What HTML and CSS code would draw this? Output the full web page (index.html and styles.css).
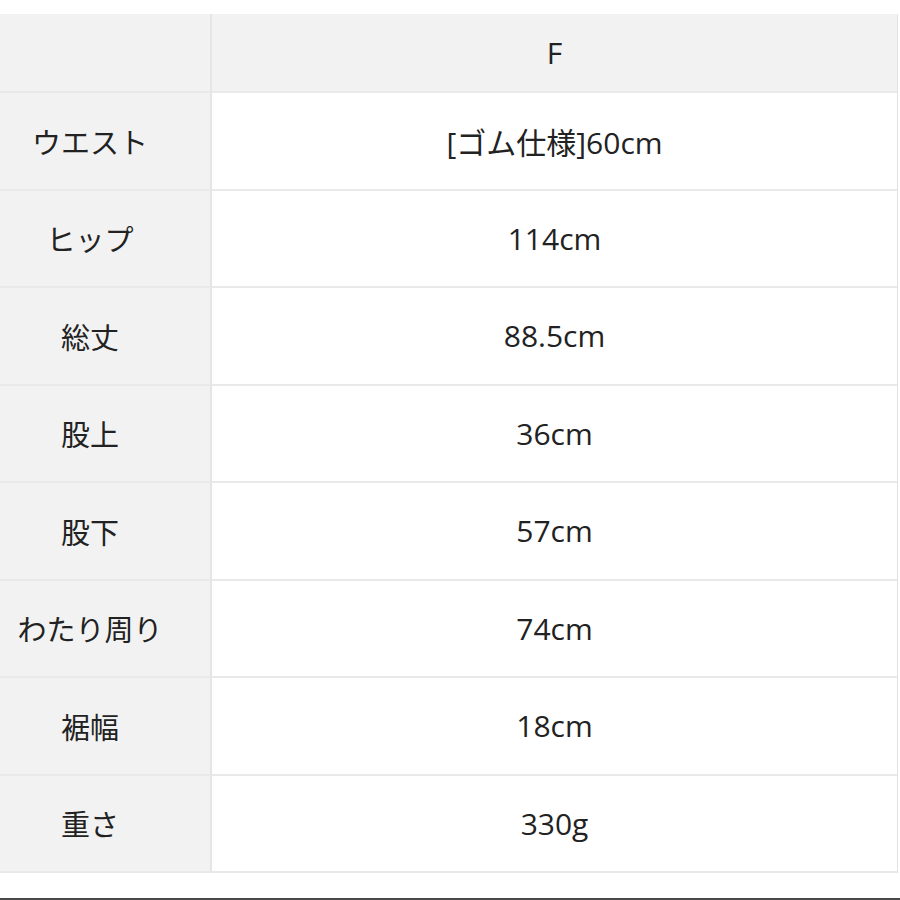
FILE: index.html
```html
<!DOCTYPE html>
<html lang="ja">
<head>
<meta charset="utf-8">
<title>サイズ表</title>
<link rel="stylesheet" href="styles.css">
</head>
<body>
<div class="page">
  <div class="size-table">
    <div class="cell label head"></div>
    <div class="cell value head">F</div>

    <div class="cell label">ウエスト</div>
    <div class="cell value">[ゴム仕様]60cm</div>

    <div class="cell label">ヒップ</div>
    <div class="cell value">114cm</div>

    <div class="cell label">総丈</div>
    <div class="cell value">88.5cm</div>

    <div class="cell label">股上</div>
    <div class="cell value">36cm</div>

    <div class="cell label">股下</div>
    <div class="cell value">57cm</div>

    <div class="cell label">わたり周り</div>
    <div class="cell value">74cm</div>

    <div class="cell label">裾幅</div>
    <div class="cell value">18cm</div>

    <div class="cell label">重さ</div>
    <div class="cell value">330g</div>
  </div>
  <div class="spacer"></div>
  <div class="bottom-rule"></div>
</div>
</body>
</html>
```
FILE: styles.css
```css
html, body {
  margin: 0;
  padding: 0;
  background: #ffffff;
}

.page {
  width: 900px;
  height: 900px;
  display: flex;
  flex-direction: column;
  padding-top: 14px;
  box-sizing: border-box;
  font-family: "Open Sans", "Noto Sans CJK JP", sans-serif;
  font-size: 29px;
  color: #222222;
}

.size-table {
  width: 898px;
  display: grid;
  grid-template-columns: 212px 1fr;
  grid-template-rows: 79px repeat(8, 97.5px);
  border-right: 1px solid #e2e2e2;
  box-sizing: border-box;
}

.cell {
  display: flex;
  align-items: center;
  justify-content: center;
  border-bottom: 2px solid #e9e9e9;
  box-sizing: border-box;
  white-space: nowrap;
}

.label {
  background: #f2f2f2;
  border-right: 2px solid #e5e5e5;
  padding-right: 30px;
}

.value {
  background: #ffffff;
  font-size: 30px;
}

.value.head {
  background: #f2f2f2;
}

.spacer {
  flex: 1;
}

.bottom-rule {
  height: 2px;
  background: #4a4a4a;
}
```
